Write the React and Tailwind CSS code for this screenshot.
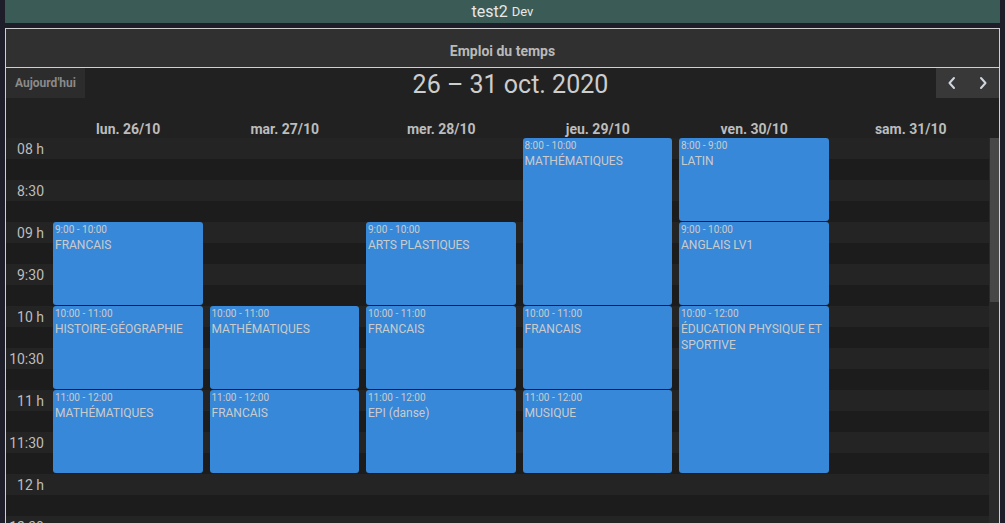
import React from "react";

const days = ["lun. 26/10", "mar. 27/10", "mer. 28/10", "jeu. 29/10", "ven. 30/10", "sam. 31/10"];

// events per day column: start/end in hours
const events = [
  [
    { start: 9, end: 10, time: "9:00 - 10:00", title: "FRANCAIS" },
    { start: 10, end: 11, time: "10:00 - 11:00", title: "HISTOIRE-GÉOGRAPHIE" },
    { start: 11, end: 12, time: "11:00 - 12:00", title: "MATHÉMATIQUES" },
  ],
  [
    { start: 10, end: 11, time: "10:00 - 11:00", title: "MATHÉMATIQUES" },
    { start: 11, end: 12, time: "11:00 - 12:00", title: "FRANCAIS" },
  ],
  [
    { start: 9, end: 10, time: "9:00 - 10:00", title: "ARTS PLASTIQUES" },
    { start: 10, end: 11, time: "10:00 - 11:00", title: "FRANCAIS" },
    { start: 11, end: 12, time: "11:00 - 12:00", title: "EPI (danse)" },
  ],
  [
    { start: 8, end: 10, time: "8:00 - 10:00", title: "MATHÉMATIQUES" },
    { start: 10, end: 11, time: "10:00 - 11:00", title: "FRANCAIS" },
    { start: 11, end: 12, time: "11:00 - 12:00", title: "MUSIQUE" },
  ],
  [
    { start: 8, end: 9, time: "8:00 - 9:00", title: "LATIN" },
    { start: 9, end: 10, time: "9:00 - 10:00", title: "ANGLAIS LV1" },
    { start: 10, end: 12, time: "10:00 - 12:00", title: "ÉDUCATION PHYSIQUE ET SPORTIVE" },
  ],
  [],
];

const slots = ["08 h", "8:30", "09 h", "9:30", "10 h", "10:30", "11 h", "11:30", "12 h", "12:30", "13 h", "13:30"];

const SLOT = 42;

const Chevron = ({ dir }) => (
  <svg width="10" height="14" viewBox="0 0 10 14" fill="none">
    <path
      d={dir === "left" ? "M7 2 L2.5 7 L7 12" : "M3 2 L7.5 7 L3 12"}
      stroke="#cfd6e0"
      strokeWidth="2"
      strokeLinecap="round"
      strokeLinejoin="round"
    />
  </svg>
);

const App = () => {
  return (
    <div className="w-[1005px] h-[523px] overflow-hidden bg-[#1e1e2b] px-[5px] flex flex-col font-['Roboto',sans-serif]">
      {/* Top bar */}
      <div className="h-[23px] shrink-0 bg-[#3b5b56] flex items-center justify-center text-[#e8e8e8]">
        <span className="text-[16px] leading-none">test2</span>
        <span className="text-[13px] leading-none ml-[4px]">Dev</span>
      </div>

      {/* Card */}
      <div className="mt-[5px] flex-1 border border-[#cfcfcf] border-b-0 flex flex-col overflow-hidden bg-[#212121]">
        <div className="h-[39px] shrink-0 bg-[#303030] border-b border-[#cfcfcf] flex items-center justify-center pt-[6px]">
          <span className="text-[14px] font-bold text-[#b9b9b9]">Emploi du temps</span>
        </div>

        {/* Toolbar */}
        <div className="h-[30px] shrink-0 flex items-center justify-between">
          <button className="h-[30px] px-[9px] bg-[#2c2c2c] text-[12px] font-bold text-[#8a8a8a]">
            Aujourd'hui
          </button>
          <div className="text-[25px] text-[#cdcdcd] leading-none pt-[2px]">26 – 31 oct. 2020</div>
          <div className="h-[30px] w-[63px] bg-[#383838] flex items-center justify-around">
            <Chevron dir="left" />
            <Chevron dir="right" />
          </div>
        </div>

        {/* Day header row */}
        <div className="mt-[20px] h-[20px] shrink-0 flex">
          <div className="w-[44px] shrink-0" />
          <div className="flex-1 grid grid-cols-6">
            {days.map((d) => (
              <div key={d} className="text-center text-[14px] font-bold text-[#bcbcbc] leading-[20px] pt-[1px]">
                {d}
              </div>
            ))}
          </div>
          <div className="w-[10px] shrink-0" />
        </div>

        {/* Time grid */}
        <div className="flex flex-1 overflow-hidden">
          <div className="flex-1 relative">
            {/* Stripes */}
            {slots.map((s) => (
              <div key={s} className="flex h-[42px]">
                <div className="w-[44px] shrink-0 flex flex-col">
                  <div className="h-[21px] bg-[#242424] flex items-center justify-end pr-[6px] pt-[1px] text-[14px] text-[#bdbdbd]">
                    {s}
                  </div>
                  <div className="h-[21px] bg-[#1c1c1c]" />
                </div>
                <div className="flex-1 flex flex-col">
                  <div className="h-[21px] bg-[#242424]" />
                  <div className="h-[21px] bg-[#1c1c1c]" />
                </div>
              </div>
            ))}

            {/* Event columns */}
            <div className="absolute top-0 bottom-0 left-[44px] right-0 grid grid-cols-6">
              {events.map((col, i) => (
                <div key={i} className="relative">
                  {col.map((ev) => (
                    <div
                      key={ev.time}
                      className="absolute left-[3px] right-[4px] bg-[#3788d8] rounded-[3px] px-[2px] pt-[1px] text-[#cbcbcb] overflow-hidden"
                      style={{ top: (ev.start - 8) * 2 * SLOT, height: (ev.end - ev.start) * 2 * SLOT - 1 }}
                    >
                      <div className="text-[10px] leading-[14px]">{ev.time}</div>
                      <div className="text-[12px] leading-[16px]">{ev.title}</div>
                    </div>
                  ))}
                </div>
              ))}
            </div>
          </div>

          {/* Scrollbar */}
          <div className="w-[10px] shrink-0 bg-[#2a2a2a] pl-[1px]">
            <div className="h-[164px] bg-[#474747]" />
          </div>
        </div>
      </div>
    </div>
  );
};

export default App;
